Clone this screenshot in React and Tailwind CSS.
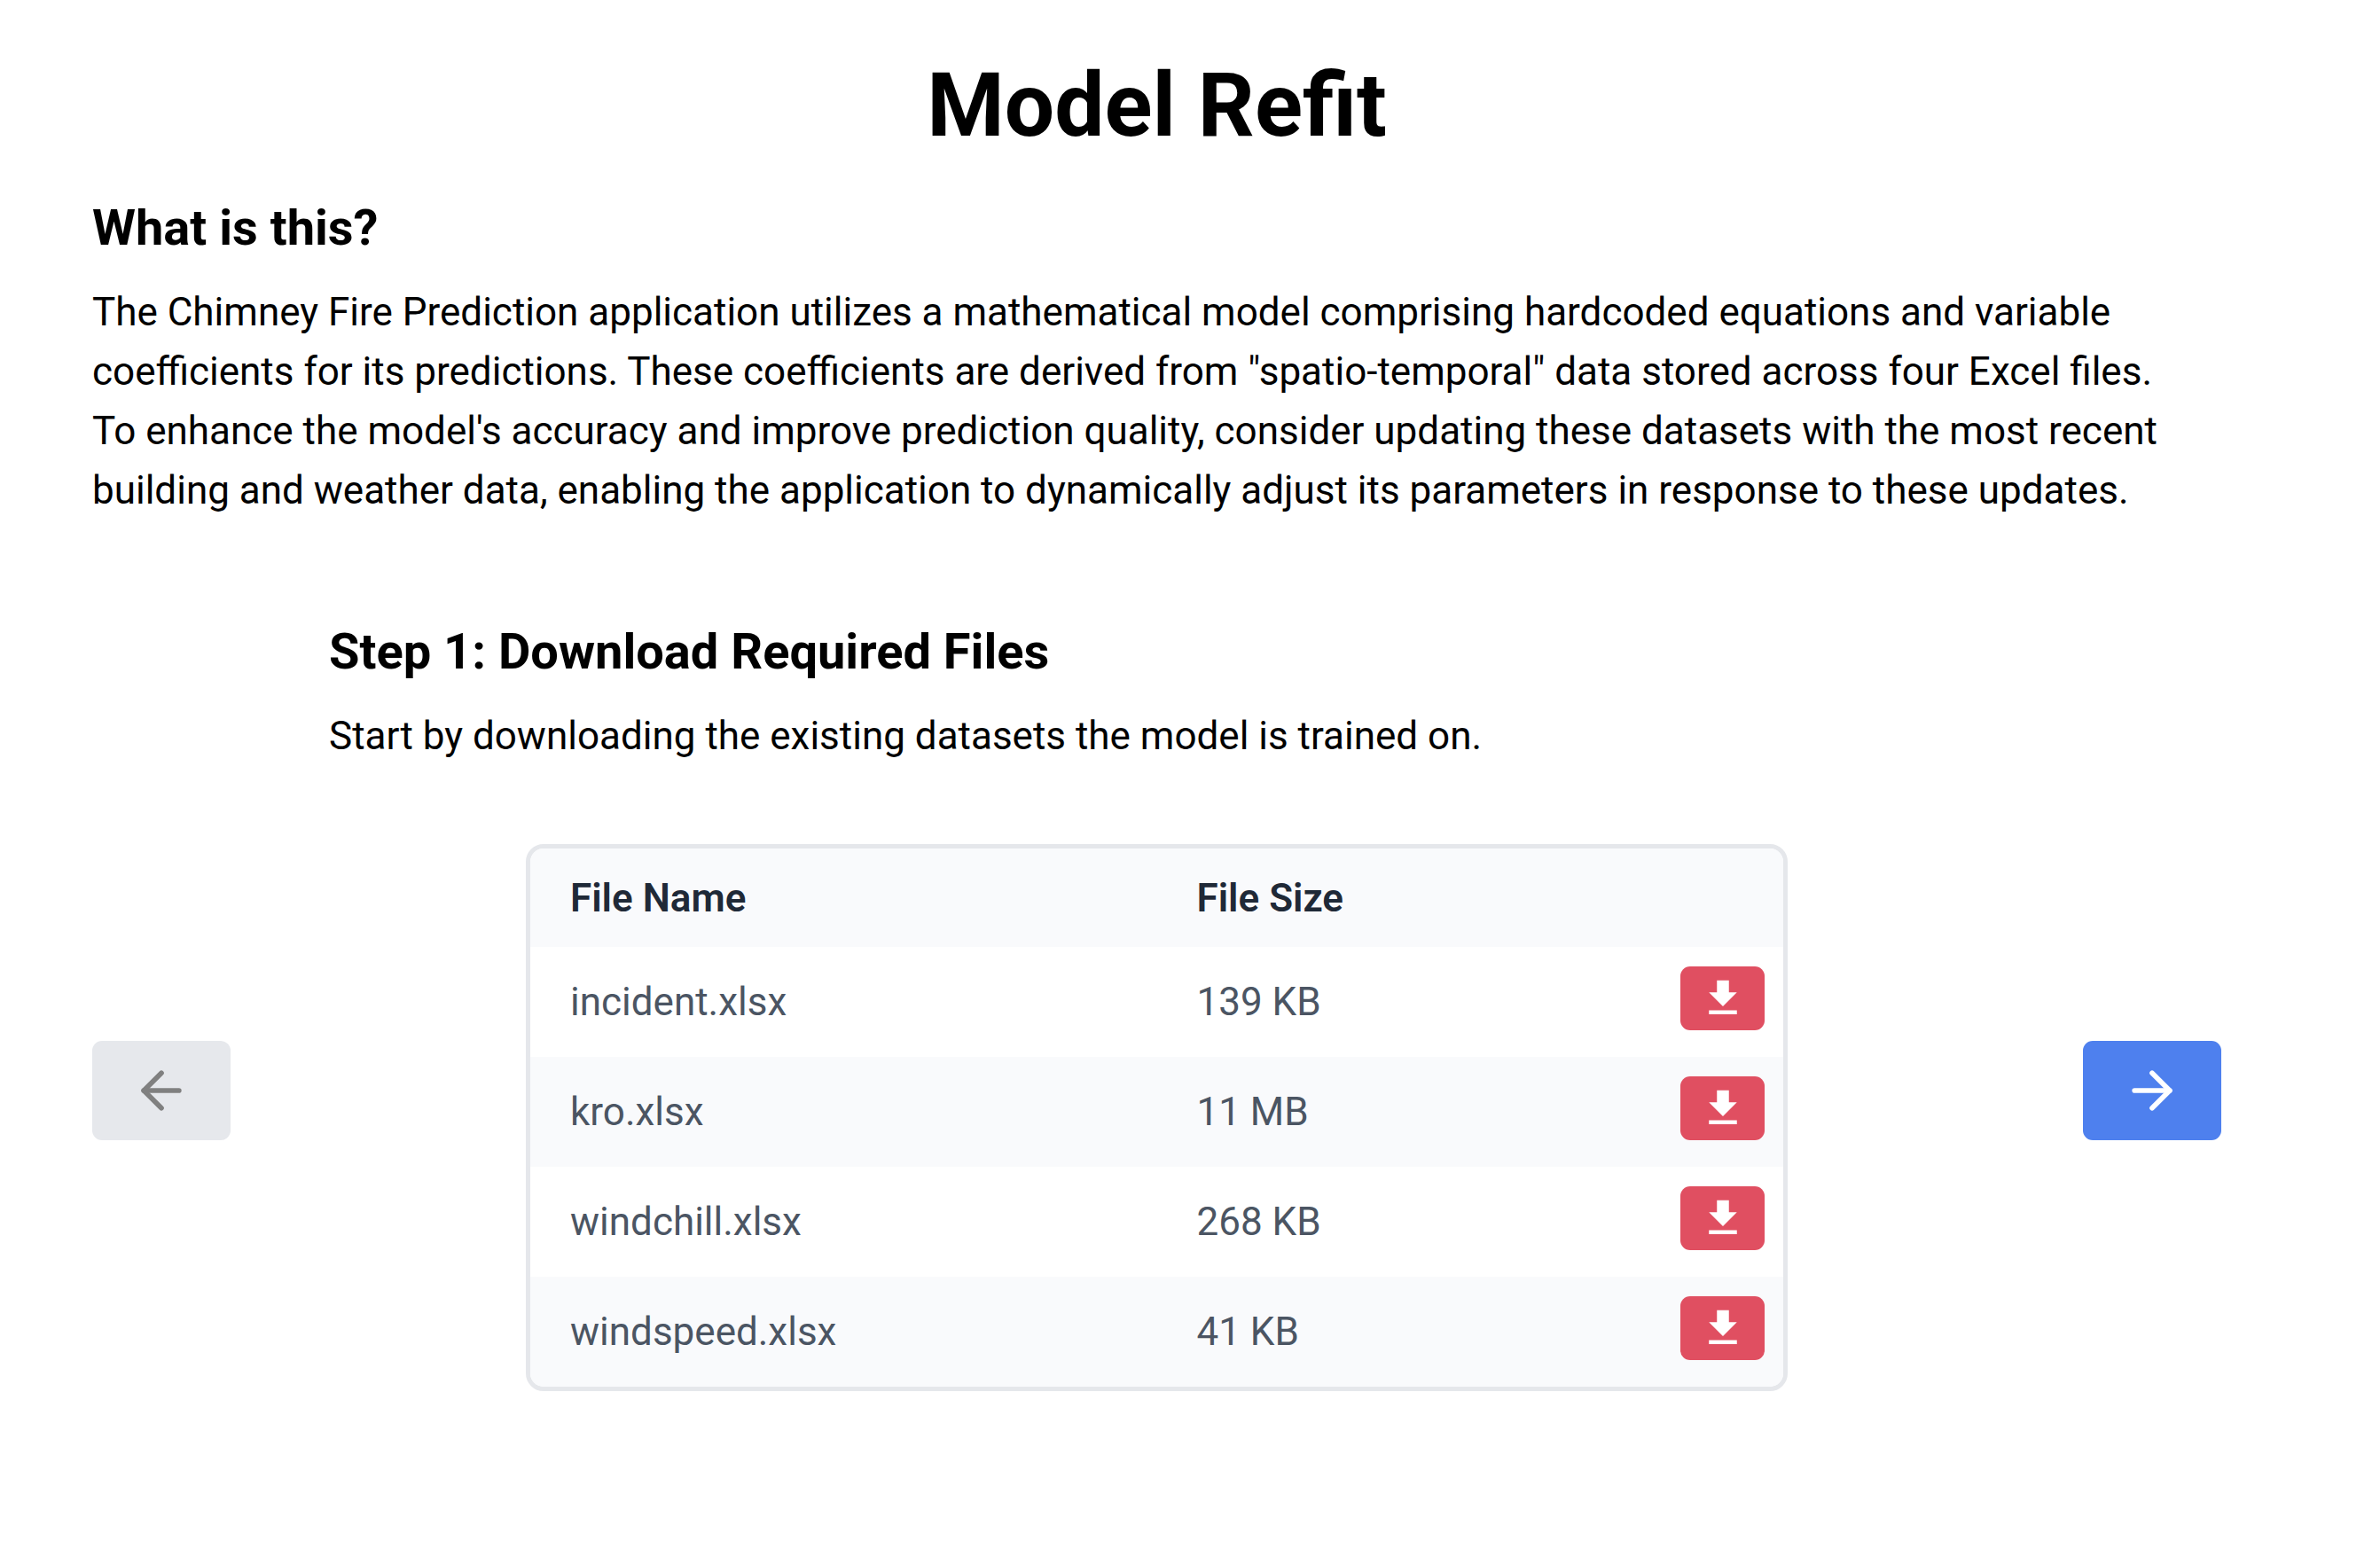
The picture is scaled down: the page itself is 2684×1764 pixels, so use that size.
import { ArrowLeft, ArrowRight } from "lucide-react";

const files = [
  { name: "incident.xlsx", size: "139 KB" },
  { name: "kro.xlsx", size: "11 MB" },
  { name: "windchill.xlsx", size: "268 KB" },
  { name: "windspeed.xlsx", size: "41 KB" },
];

function DownloadIcon() {
  return (
    <svg viewBox="0 0 24 24" className="size-[54px]" fill="currentColor" aria-hidden="true">
      <path d="M19 9h-4V3H9v6H5l7 7 7-7zM5 18v2h14v-2H5z" />
    </svg>
  );
}

function FileTable() {
  return (
    <div className="mx-auto w-full max-w-[1423px] overflow-hidden rounded-[20px] border-5 border-[#e5e7eb]">
      <table className="w-full table-fixed text-left text-[44px] leading-[64px]">
        <thead className="bg-[#f9fafc] text-[#1f2937]">
          <tr className="h-[111px]">
            <th scope="col" className="w-1/2 pl-[45px] font-semibold">File Name</th>
            <th scope="col" className="pl-[45px] font-semibold">File Size</th>
            <td className="w-[140px]"></td>
          </tr>
        </thead>
        <tbody className="text-[#4b5563]">
          {files.map((f) => (
            <tr key={f.name} className="h-[124px] even:bg-[#f9fafc]">
              <td className="pl-[45px]">{f.name}</td>
              <td className="pl-[45px]">{f.size}</td>
              <td className="pt-[22px] pr-[21px] align-top">
                <button type="button" aria-label={`Download ${f.name}`} className="ml-auto flex h-[72px] w-[95px] items-center justify-center rounded-[11px] bg-[#e04f61] text-white">
                  <DownloadIcon />
                </button>
              </td>
            </tr>
          ))}
        </tbody>
      </table>
    </div>
  );
}

export default function App() {
  return (
    <main className="min-h-screen bg-white pt-[65px] pr-[179px] pl-[104px] font-['Roboto',sans-serif] text-black">
      <h1 className="text-center text-[100px] leading-[108px] font-bold">Model Refit</h1>
      <section className="mt-[46px]">
        <h2 className="text-[56px] leading-[76px] font-bold">What is this?</h2>
        <p className="mt-6 pr-10 text-[44px] leading-[67px]">
          The Chimney Fire Prediction application utilizes a mathematical model comprising hardcoded equations and variable
          coefficients for its predictions. These coefficients are derived from "spatio-temporal" data stored across four Excel files.
          To enhance the model's accuracy and improve prediction quality, consider updating these datasets with the most recent
          building and weather data, enabling the application to dynamically adjust its parameters in response to these updates.
        </p>
      </section>
      <div className="mt-[110px] flex items-center justify-between">
        <button type="button" disabled aria-label="Previous step" className="flex h-[112px] w-[156px] items-center justify-center rounded-[11px] bg-[#e6e8ec] text-[#808080]">
          <ArrowLeft className="size-[68px]" />
        </button>
        <section className="mx-[111px] flex-1 pb-[193px]">
          <h2 className="text-[56px] leading-[76px] font-bold">Step 1: Download Required Files</h2>
          <p className="mt-6 mb-[88px] text-[44px] leading-[67px]">Start by downloading the existing datasets the model is trained on.</p>
          <FileTable />
        </section>
        <button type="button" aria-label="Next step" className="flex h-[112px] w-[156px] items-center justify-center rounded-[11px] bg-[#4e80ee] text-white">
          <ArrowRight className="size-[68px]" />
        </button>
      </div>
    </main>
  );
}
